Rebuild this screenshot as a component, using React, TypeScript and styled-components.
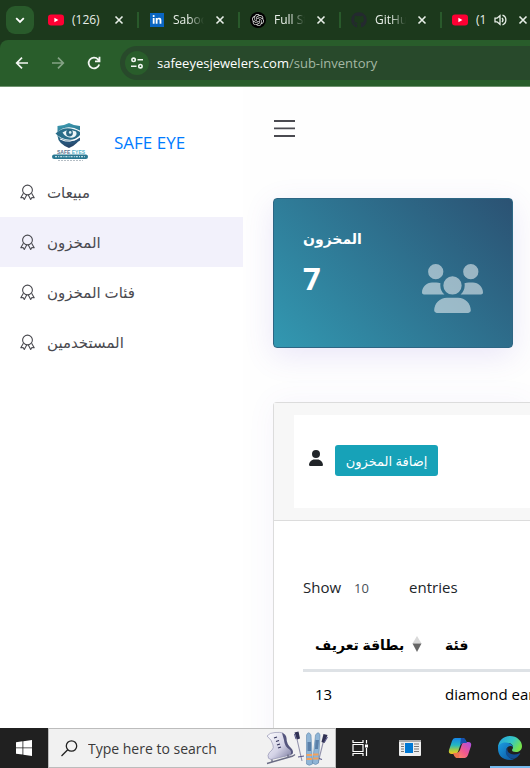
import React from "react";
import styled, { createGlobalStyle, css } from "styled-components";
import { FaUser, FaUsers, FaGithub, FaLinkedinIn } from "react-icons/fa6";
import { SiOpenai } from "react-icons/si";

const GlobalStyle = createGlobalStyle`
  * { box-sizing: border-box; }
  body {
    margin: 0;
    font-family: "Noto Sans", "Open Sans", "DejaVu Sans", sans-serif;
    font-size: 15px;
    color: #212529;
    background: #fff;
    overflow: hidden;
  }
  button, input, select { font: inherit; color: inherit; }
  button { border: 0; padding: 0; background: none; }
  svg { display: block; flex: none; }
`;

const Screen = styled.div`
  display: flex;
  flex-direction: column;
  height: 100vh;
`;

/* ---------- browser ---------- */

const TabStrip = styled.div`
  display: flex;
  align-items: center;
  flex: none;
  height: 40px;
  padding-left: 6px;
  background: #1c391c;
  overflow: hidden;
`;

const TabSearch = styled.button`
  display: grid;
  place-items: center;
  flex: none;
  width: 28px;
  height: 28px;
  margin-right: 4px;
  border-radius: 9px;
  background: #295a2b;
  color: #fff;
`;

const Tab = styled.div`
  display: flex;
  align-items: center;
  flex: none;
  width: 101px;
  height: 16px;
  padding: 0 13px 0 10px;
  border-right: 2px solid #295a2b;
  color: #e8efe8;
`;

const Favicon = styled.span`
  display: grid;
  place-items: center;
  flex: none;
  width: 16px;
  height: 16px;
  margin-right: 8px;
`;

const LinkedIn = styled.span`
  display: grid;
  place-items: center;
  width: 14px;
  height: 14px;
  background: #0a66c2;
  color: #fff;
`;

const OpenAi = styled.span`
  display: grid;
  place-items: center;
  width: 16px;
  height: 16px;
  border-radius: 50%;
  background: #000;
  color: #ddd;
`;

const TabTitle = styled.span<{ $fade: boolean }>`
  flex: 1;
  min-width: 0;
  overflow: hidden;
  white-space: nowrap;
  font-family: "Open Sans", sans-serif;
  font-size: 12px;
  line-height: 16px;
  ${(p) =>
    p.$fade &&
    css`
      mask-image: linear-gradient(90deg, #000 50%, transparent);
    `}
`;

const CloseTab = styled.button`
  margin-left: 11px;
`;

const SoundTab = styled.button`
  margin-left: 5px;
`;

const Toolbar = styled.div`
  display: flex;
  align-items: center;
  flex: none;
  height: 47px;
  padding-left: 14px;
  gap: 20px;
  background: #295d2b;
  border-bottom: 1px solid #6f936f;
  border-top-left-radius: 8px;
  color: #f2f6f2;
`;

const ToolbarBack = styled.div`
  flex: none;
  background: #1c391c;
`;

const NavButton = styled.button<{ $dim?: boolean }>`
  flex: none;
  width: 16px;
  height: 16px;
  opacity: ${(p) => (p.$dim ? 0.45 : 1)};
`;

const AddressBar = styled.div`
  display: flex;
  align-items: center;
  flex: 1;
  min-width: 0;
  height: 34px;
  margin-left: -2px;
  padding-left: 5px;
  gap: 8px;
  border-radius: 17px 0 0 17px;
  background: #28492b;
`;

const SiteInfo = styled.button`
  display: grid;
  place-items: center;
  flex: none;
  width: 24px;
  height: 24px;
  border-radius: 50%;
  background: #295d2b;
`;

const Url = styled.a`
  font-family: "Open Sans", sans-serif;
  font-size: 13px;
  line-height: 20px;
  color: #fff;
  text-decoration: none;
  white-space: nowrap;
`;

const UrlPath = styled.span`
  color: #a4b8a4;
`;

/* ---------- page ---------- */

const Page = styled.div`
  display: grid;
  grid-template-columns: 243px minmax(0, 1fr);
  flex: 1;
  min-height: 0;
  overflow: hidden;
`;

const Sidebar = styled.nav`
  padding-top: 35px;
`;

const Brand = styled.a`
  display: flex;
  align-items: center;
  gap: 25px;
  height: 40px;
  margin-bottom: 5px;
  padding-left: 51px;
  color: #007bff;
  font-family: "Open Sans", sans-serif;
  font-size: 17px;
  text-decoration: none;
`;

const NavLink = styled.a<{ $active?: boolean }>`
  display: flex;
  align-items: center;
  gap: 12px;
  height: 50px;
  padding-left: 20px;
  background: ${(p) => (p.$active ? "#f2f1fb" : "transparent")};
  color: #4a4a50;
  font-size: 15px;
  text-decoration: none;
`;

const Main = styled.main`
  padding: 33px 0 0 30px;
  background: #fefefe;
  overflow: hidden;
`;

const MenuButton = styled.button`
  display: block;
`;

const StatCard = styled.section`
  display: flex;
  justify-content: space-between;
  align-items: flex-end;
  width: 240px;
  height: 150px;
  margin-top: 60px;
  padding: 28px 29px 28px;
  border: 1px solid #2d6684;
  border-radius: 4px;
  background: linear-gradient(45deg, #3298b1, #2b5273);
  box-shadow: 0 8px 30px rgba(113, 87, 214, 0.14);
  color: #fff;
`;

const StatText = styled.div`
  align-self: flex-start;
`;

const StatTitle = styled.h2`
  margin: 0;
  font-size: 14px;
  line-height: 24px;
  font-weight: 700;
`;

const StatValue = styled.p`
  margin: 3px 0 0;
  font-family: "Open Sans", sans-serif;
  font-size: 31px;
  line-height: 48px;
  font-weight: 700;
`;

const StatIcon = styled(FaUsers)`
  opacity: 0.52;
`;

const Panel = styled.section`
  margin-top: 54px;
  height: 400px;
  border: 1px solid #dcdcdc;
  border-right: 0;
  border-top-left-radius: 4px;
  background: #fff;
  box-shadow: 0 0 30px rgba(113, 87, 214, 0.06);
`;

const PanelHeader = styled.header`
  padding: 12px 0 12px 20px;
  border-bottom: 1px solid #dcdcdc;
  background: #f7f7f7;
`;

const Actions = styled.div`
  display: flex;
  align-items: center;
  gap: 11px;
  height: 93px;
  padding: 0 0 2px 14px;
  background: #fff;
`;

const UserIcon = styled(FaUser)`
  margin-bottom: 6px;
`;

const AddButton = styled.button`
  width: 103px;
  height: 31px;
  border-radius: 3px;
  background: #17a2b8;
  color: #fff;
  font-size: 13px;
  line-height: 20px;
  white-space: nowrap;
`;

const PanelBody = styled.div`
  padding: 53px 0 0 29px;
`;

const LengthLabel = styled.label`
  display: flex;
  align-items: center;
  height: 26px;
  font-family: "Open Sans", sans-serif;
  font-size: 15px;
`;

const LengthSelect = styled.select`
  width: 55px;
  margin: 0 0 0 13px;
  padding: 2px 0 0;
  border: 0;
  appearance: none;
  background: transparent;
  color: #495057;
  font-size: 13px;
`;

const Table = styled.table`
  width: 100%;
  margin-top: 20px;
  border-collapse: collapse;
  table-layout: fixed;
  color: #000;
  white-space: nowrap;
`;

const HeadCell = styled.th`
  height: 50px;
  padding: 0 12px;
  border-bottom: 3px solid #dee2e6;
  font-size: 14px;
  font-weight: 700;
  text-align: left;

  &:first-child {
    width: 130px;
  }
`;

const SortLabel = styled.span`
  display: flex;
  align-items: center;
  justify-content: space-between;
  width: 107px;
`;

const Cell = styled.td`
  height: 46px;
  padding: 0 12px;
  overflow: hidden;
  font-family: "Open Sans", sans-serif;
`;

/* ---------- taskbar ---------- */

const Taskbar = styled.footer`
  display: flex;
  flex: none;
  height: 40px;
  background: #202020;
`;

const TaskApps = styled.div`
  display: flex;
  gap: 2px;
`;

const TaskButton = styled.button<{ $active?: boolean }>`
  display: grid;
  place-items: center;
  flex: 0 0 48px;
  height: 40px;
  ${(p) =>
    p.$active &&
    css`
      background: linear-gradient(#76b9ed, #76b9ed) center bottom / 40px 2px no-repeat;
    `}
`;

const SearchBox = styled.label`
  display: flex;
  align-items: center;
  flex: 0 0 288px;
  padding: 0 4px 0 12px;
  border: 1px solid #bcbcbc;
  background: #f1f1f1;
`;

const SearchInput = styled.input`
  flex: 1;
  min-width: 0;
  margin-left: 10px;
  padding: 0;
  border: 0;
  background: transparent;
  font-family: "Open Sans", sans-serif;
  font-size: 14px;

  &::placeholder {
    color: #3a3a3a;
    opacity: 1;
  }
`;

/* ---------- drawings ---------- */

const YouTubeIcon = () => (
  <svg width="16" height="16" viewBox="0 0 16 16" aria-hidden="true">
    <rect y="2.5" width="16" height="11" rx="3" fill="#ff0033" />
    <path d="M6.4 5.7v4.6L10.4 8z" fill="#fff" />
  </svg>
);

const CloseIcon = () => (
  <svg width="10" height="10" viewBox="0 0 10 10" stroke="currentColor" strokeWidth="1.6" aria-hidden="true">
    <path d="M1.5 1.5l7 7M8.5 1.5l-7 7" />
  </svg>
);

const SoundIcon = () => (
  <svg width="13" height="12" viewBox="0 0 13 12" fill="none" stroke="currentColor" strokeWidth="1.3" aria-hidden="true">
    <path d="M1 4.2h2L6 1.7v8.6L3 7.8H1z" />
    <path d="M8 4q2 2 0 4M8.5 1.2c4.5 1.6 4.5 8 0 9.6" />
  </svg>
);

const ChevronIcon = () => (
  <svg width="10" height="10" viewBox="0 0 10 10" fill="none" stroke="currentColor" strokeWidth="1.8" aria-hidden="true">
    <path d="M1.2 3.2L5 7l3.8-3.8" />
  </svg>
);

const BackIcon = () => (
  <svg width="16" height="16" viewBox="0 0 16 16" fill="none" stroke="currentColor" strokeWidth="1.7" aria-hidden="true">
    <path d="M14 8H3M8 2.7L2.7 8 8 13.3" />
  </svg>
);

const ForwardIcon = () => (
  <svg width="16" height="16" viewBox="0 0 16 16" fill="none" stroke="currentColor" strokeWidth="1.7" aria-hidden="true">
    <path d="M2 8h11M8 2.7L13.3 8 8 13.3" />
  </svg>
);

const ReloadIcon = () => (
  <svg width="16" height="16" viewBox="0 0 16 16" fill="none" stroke="currentColor" strokeWidth="1.8" aria-hidden="true">
    <path d="M13.2 9.5A5.4 5.4 0 1 1 12 4.3l1.3 1.4M13.5 1.8v4.6H9" />
  </svg>
);

const TuneIcon = () => (
  <svg width="14" height="14" viewBox="0 0 14 14" fill="none" stroke="currentColor" strokeWidth="1.6" aria-hidden="true">
    <circle cx="3.6" cy="3.8" r="1.7" />
    <path d="M7.5 3.8H13M1 10.2h5.5" />
    <circle cx="10.4" cy="10.2" r="1.7" />
  </svg>
);

const BadgeIcon = () => (
  <svg width="15" height="16" viewBox="0 0 15 16" fill="none" stroke="currentColor" strokeWidth="1.1" strokeLinejoin="round" aria-hidden="true">
    <circle cx="7.5" cy="6" r="4.9" />
    <path d="M3.400 9.200L.8 13.700l2.300-.2 1.200 2 2.400-4.500M11.600 9.200l2.600 4.500-2.300-.2-1.200 2-2.400-4.500" />
  </svg>
);

const LogoIcon = () => (
  <svg width="38" height="40" viewBox="0 0 38 40" aria-hidden="true">
    <defs>
      <linearGradient id="shield" x1="0" y1="0" x2="0.2" y2="1">
        <stop offset="0" stopColor="#3f9fb5" />
        <stop offset=".5" stopColor="#2c7690" />
        <stop offset="1" stopColor="#28466a" />
      </linearGradient>
    </defs>
    <path d="M6.500 4Q13 3.800 18 1q5 2.800 11 3v10q-.5 7.500-11 12Q7 21.500 6.500 14z" fill="url(#shield)" />
    <path d="M5 11.500Q15 .5 29 8.500V20q-5-2-9-1.500Q10 19 5 11.500z" fill="#fff" opacity=".95" />
    <path d="M4.500 11.500Q15 1.800 29 10v3q-4 5-10 4.800Q10 17.500 4.500 11.500z" fill="#2a6e8a" />
    <path d="M11.500 10.500Q17 6 25 9.500q2 4-3 6-7 1-10.500-5z" fill="#eef6f8" />
    <circle cx="18.500" cy="11" r="3.400" fill="#2b6783" />
    <circle cx="19.200" cy="10.400" r="1.300" fill="#d8eef3" />
    <path d="M8 17.500q10 6 21-2v3q-9 6-18 2.500z" fill="#28547a" />
    <path d="M9 17q10 5.500 20-2.500" fill="none" stroke="#fff" strokeWidth="1" />
    <text x="6" y="31.500" fontFamily="Liberation Sans, sans-serif" fontSize="5" fontWeight="700" fill="#5b7590">
      SAFE <tspan fill="#57b3ca">EYES</tspan>
    </text>
    <rect x="1" y="32.500" width="36" height="4.500" rx="2.200" fill="#2b7892" />
    <path d="M4 34.700h30" stroke="#c1dfe7" strokeWidth="1.200" strokeDasharray="2 1.200 1 1" />
    <path d="M7 38.500h25" stroke="#b6bec5" strokeDasharray="2 1" />
  </svg>
);

const MenuIcon = () => (
  <svg width="23" height="18" viewBox="0 0 23 18" fill="#4a4a50" aria-hidden="true">
    <path d="M1 0h21v2H1zM1 7.500h21v1.700H1zM1 15h21v2H1z" />
  </svg>
);

const SortIcon = () => (
  <svg width="10" height="16" viewBox="0 0 10 16" aria-hidden="true">
    <path d="M5 0l4.500 7.500h-9z" fill="#d9d9d9" />
    <path d="M5 16L.5 7.500h9z" fill="#666" />
  </svg>
);

const WindowsIcon = () => (
  <svg width="16" height="16" viewBox="0 0 16 16" fill="#fff" aria-hidden="true">
    <path d="M0 2.200L6.500 1.300V7.500H0zM7.300 1.200L16 0v7.500H7.300zM0 8.300h6.500v6.300L0 13.700zM7.300 8.300H16V16l-8.700-1.200z" />
  </svg>
);

const SearchIcon = () => (
  <svg width="17" height="17" viewBox="0 0 17 17" fill="none" stroke="#222" strokeWidth="1.300" aria-hidden="true">
    <circle cx="10.500" cy="6" r="5.200" />
    <path d="M6.700 9.800L.5 16" />
  </svg>
);

const WinterSportsIcon = () => (
  <svg width="66" height="36" viewBox="0 0 66 36" aria-hidden="true">
    <defs>
      <linearGradient id="skate" x1="0" y1="0" x2="1" y2="1">
        <stop offset="0" stopColor="#fff" />
        <stop offset=".55" stopColor="#d3d2e6" />
        <stop offset="1" stopColor="#77789c" />
      </linearGradient>
    </defs>
    <path d="M2 6q3-3.500 8-3.500 5-.5 8 .5 2 3 2 8 1 6 5 8.500 3 2.500 1 5.500L6 29.500q-3.500-.5-3-4 .5-3 4-5.500 2-2 1-5-1-5-6-9z" fill="url(#skate)" stroke="#8687a9" strokeWidth=".6" />
    <path d="M17 3q4 1 4.500 5 0 6 4.500 10 3 3 1.500 6l-2 .5q1.500-3-1-5-5-3-5.500-9.500z" fill="#55567e" />
    <path d="M9 8l3-1M11 11.500l3-1M12 15l3-1M13 18l3-1" stroke="#33345a" strokeWidth="1.300" />
    <path d="M2 33.500l26-7.500M7 29.500v2.500M23 24.500v3M28 26l2-1.500" fill="none" stroke="#6b6d85" strokeWidth="1.400" />
    <path d="M31.500 7l5.500 24M59 9l-6 24" stroke="#9191ab" strokeWidth="1.100" />
    <path d="M29.500 2.500l4-1 1.500 7-3 1zM58.500 4l4 1-3 8-3-1z" fill="#303153" />
    <path d="M29.500 4l1.500 5M62.500 7l-3 5M33 27l6-1M51 27.500l6 2" stroke="#59598a" strokeWidth="1.100" />
    <path d="M41.500 5q2-4.500 4.500 0l1.500 29q-3.500 2.500-6 0zM50.500 5q3-4.500 4.500 0l-1.500 28q-3 3-6 0z" fill="#8fb5d6" stroke="#6088ad" strokeWidth=".6" />
    <path d="M42.500 12H46v9h-3.500zM50.500 10H54l-1 9h-3z" fill="#5a80a9" />
    <path d="M41.500 25H47M41.500 29H47M48 24.500h5.500M48 28.500h5.500" stroke="#f3a15b" strokeWidth="1.800" />
  </svg>
);

const TaskViewIcon = () => (
  <svg width="17" height="16" viewBox="0 0 17 16" fill="none" stroke="#fff" strokeWidth="1.200" aria-hidden="true">
    <path d="M1 0v2.500h10V0M1 16v-2.500h10V16M1 4.500h10v7H1zM14.500 0v3.500M14.500 8v8" />
    <path d="M13 4.500h3v3h-3z" fill="#fff" stroke="none" />
  </svg>
);

const NewsIcon = () => (
  <svg width="22" height="16" viewBox="0 0 22 16" aria-hidden="true">
    <rect width="22" height="16" rx="1" fill="#eee" />
    <path d="M0 0h22v2H0z" fill="#aaa" />
    <rect x="6" y="3" width="8" height="10" fill="#0078d4" />
    <path d="M2 4h3M2 6.500h3M2 9h3M2 11.500h3M15 4h5M15 6.500h5M15 9h5M15 11.500h5" stroke="#777" />
  </svg>
);

const CopilotIcon = () => (
  <svg width="24" height="22" viewBox="0 0 24 22" aria-hidden="true">
    <defs>
      <linearGradient id="cpLeft" x1="0" y1="0" x2="0" y2="1">
        <stop offset="0" stopColor="#1684e8" />
        <stop offset=".45" stopColor="#24b8c0" />
        <stop offset=".75" stopColor="#a3cc45" />
        <stop offset="1" stopColor="#f7c51e" />
      </linearGradient>
      <linearGradient id="cpRight" x1="1" y1="0" x2="0" y2="1">
        <stop offset="0" stopColor="#a64ee8" />
        <stop offset=".5" stopColor="#f1588e" />
        <stop offset="1" stopColor="#ff9a55" />
      </linearGradient>
    </defs>
    <path d="M7 1h8q2 0 3 3l1 2h-4q-2 0-3 3l-2 6q-1 2-3 2H4q-4 0-3-4L4 4q1-3 3-3z" fill="url(#cpLeft)" />
    <path d="M17 21H9q-2 0-3-3l-1-2h4q2 0 3-3l2-6q1-2 3-2h3q4 0 3 4l-3 9q-1 3-3 3z" fill="url(#cpRight)" />
    <path d="M13 1h2q2 0 3 3l1 2h-4q-2 0-3 2z" fill="#164fae" />
    <path d="M11 21H9q-2 0-3-3l-1-2h4q2 0 3-2z" fill="#ee744d" />
  </svg>
);

const EdgeIcon = () => (
  <svg width="24" height="24" viewBox="0 0 24 24" aria-hidden="true">
    <defs>
      <linearGradient id="edgeTop" x1="0" y1="0" x2="1" y2=".5">
        <stop offset="0" stopColor="#249ee1" />
        <stop offset=".6" stopColor="#36c8c3" />
        <stop offset="1" stopColor="#76e34c" />
      </linearGradient>
      <linearGradient id="edgeLow" x1="0" y1="0" x2="1" y2="1">
        <stop offset="0" stopColor="#1b9de2" />
        <stop offset="1" stopColor="#0b529c" />
      </linearGradient>
    </defs>
    <path d="M0 12C0 5 5 0 12 0s12 5 12 10c0 4-3 6-6 6-3 0-4-1-4-2 0-.7 1-1 1-3 0-2-2-4-5-4C5 7 1 9 0 12z" fill="url(#edgeTop)" />
    <path d="M0 12c0-3 3-5.500 7.500-5.500 4 0 7.500 2 7.500 5-2-3-7-1-7 3.500 0 5 5 9 9 7.500Q14.500 24 12 24 0 23.500 0 12z" fill="url(#edgeLow)" />
    <path d="M9.500 11.500C5 17 10 24 17 22.500q3-1.500 5-4.500c.5-1-.3-1-1-.6-5 2.600-13 .6-11.500-5.900z" fill="#124e92" />
  </svg>
);

/* ---------- data ---------- */

const tabs = [
  { icon: <YouTubeIcon />, title: "(126)", fade: false, sound: false },
  { icon: <LinkedIn><FaLinkedinIn size={10} /></LinkedIn>, title: "Saboor", fade: true, sound: false },
  { icon: <OpenAi><SiOpenai size={12} /></OpenAi>, title: "Full Stack", fade: true, sound: false },
  { icon: <FaGithub size={16} color="#24292f" />, title: "GitHub", fade: true, sound: false },
  { icon: <YouTubeIcon />, title: "(1", fade: false, sound: true },
];

const links = [
  { text: "مبيعات", active: false },
  { text: "المخزون", active: true },
  { text: "فئات المخزون", active: false },
  { text: "المستخدمين", active: false },
];

export default function App() {
  return (
    <Screen>
      <GlobalStyle />
      <TabStrip>
        <TabSearch aria-label="Search tabs"><ChevronIcon /></TabSearch>
        {tabs.map((tab, i) => (
          <Tab key={i}>
            <Favicon>{tab.icon}</Favicon>
            <TabTitle $fade={tab.fade}>{tab.title}</TabTitle>
            {tab.sound && <SoundTab aria-label="Mute tab"><SoundIcon /></SoundTab>}
            <CloseTab aria-label="Close tab"><CloseIcon /></CloseTab>
          </Tab>
        ))}
      </TabStrip>
      <ToolbarBack>
        <Toolbar>
          <NavButton aria-label="Back"><BackIcon /></NavButton>
          <NavButton aria-label="Forward" $dim><ForwardIcon /></NavButton>
          <NavButton aria-label="Reload"><ReloadIcon /></NavButton>
          <AddressBar>
            <SiteInfo aria-label="Site information"><TuneIcon /></SiteInfo>
            <Url href="#">safeeyesjewelers.com<UrlPath>/sub-inventory</UrlPath></Url>
          </AddressBar>
        </Toolbar>
      </ToolbarBack>

      <Page>
        <Sidebar>
          <Brand href="#"><LogoIcon />SAFE EYE</Brand>
          {links.map((link) => (
            <NavLink key={link.text} href="#" lang="ar" $active={link.active}>
              <BadgeIcon />
              {link.text}
            </NavLink>
          ))}
        </Sidebar>
        <Main>
          <MenuButton aria-label="Menu"><MenuIcon /></MenuButton>
          <StatCard>
            <StatText>
              <StatTitle lang="ar">المخزون</StatTitle>
              <StatValue>7</StatValue>
            </StatText>
            <StatIcon size={61} />
          </StatCard>
          <Panel>
            <PanelHeader>
              <Actions>
                <UserIcon size={16} />
                <AddButton lang="ar">إضافة المخزون</AddButton>
              </Actions>
            </PanelHeader>
            <PanelBody>
              <LengthLabel>
                Show
                <LengthSelect defaultValue="10">
                  <option>10</option>
                  <option>25</option>
                </LengthSelect>
                entries
              </LengthLabel>
              <Table>
                <thead>
                  <tr>
                    <HeadCell lang="ar"><SortLabel>بطاقة تعريف<SortIcon /></SortLabel></HeadCell>
                    <HeadCell lang="ar">فئة</HeadCell>
                  </tr>
                </thead>
                <tbody>
                  <tr>
                    <Cell>13</Cell>
                    <Cell>diamond earrings</Cell>
                  </tr>
                </tbody>
              </Table>
            </PanelBody>
          </Panel>
        </Main>
      </Page>

      <Taskbar>
        <TaskButton aria-label="Start"><WindowsIcon /></TaskButton>
        <SearchBox>
          <SearchIcon />
          <SearchInput placeholder="Type here to search" aria-label="Type here to search" />
          <WinterSportsIcon />
        </SearchBox>
        <TaskApps>
          <TaskButton aria-label="Task view"><TaskViewIcon /></TaskButton>
          <TaskButton aria-label="News"><NewsIcon /></TaskButton>
          <TaskButton aria-label="Copilot"><CopilotIcon /></TaskButton>
          <TaskButton $active aria-label="Edge"><EdgeIcon /></TaskButton>
        </TaskApps>
      </Taskbar>
    </Screen>
  );
}
